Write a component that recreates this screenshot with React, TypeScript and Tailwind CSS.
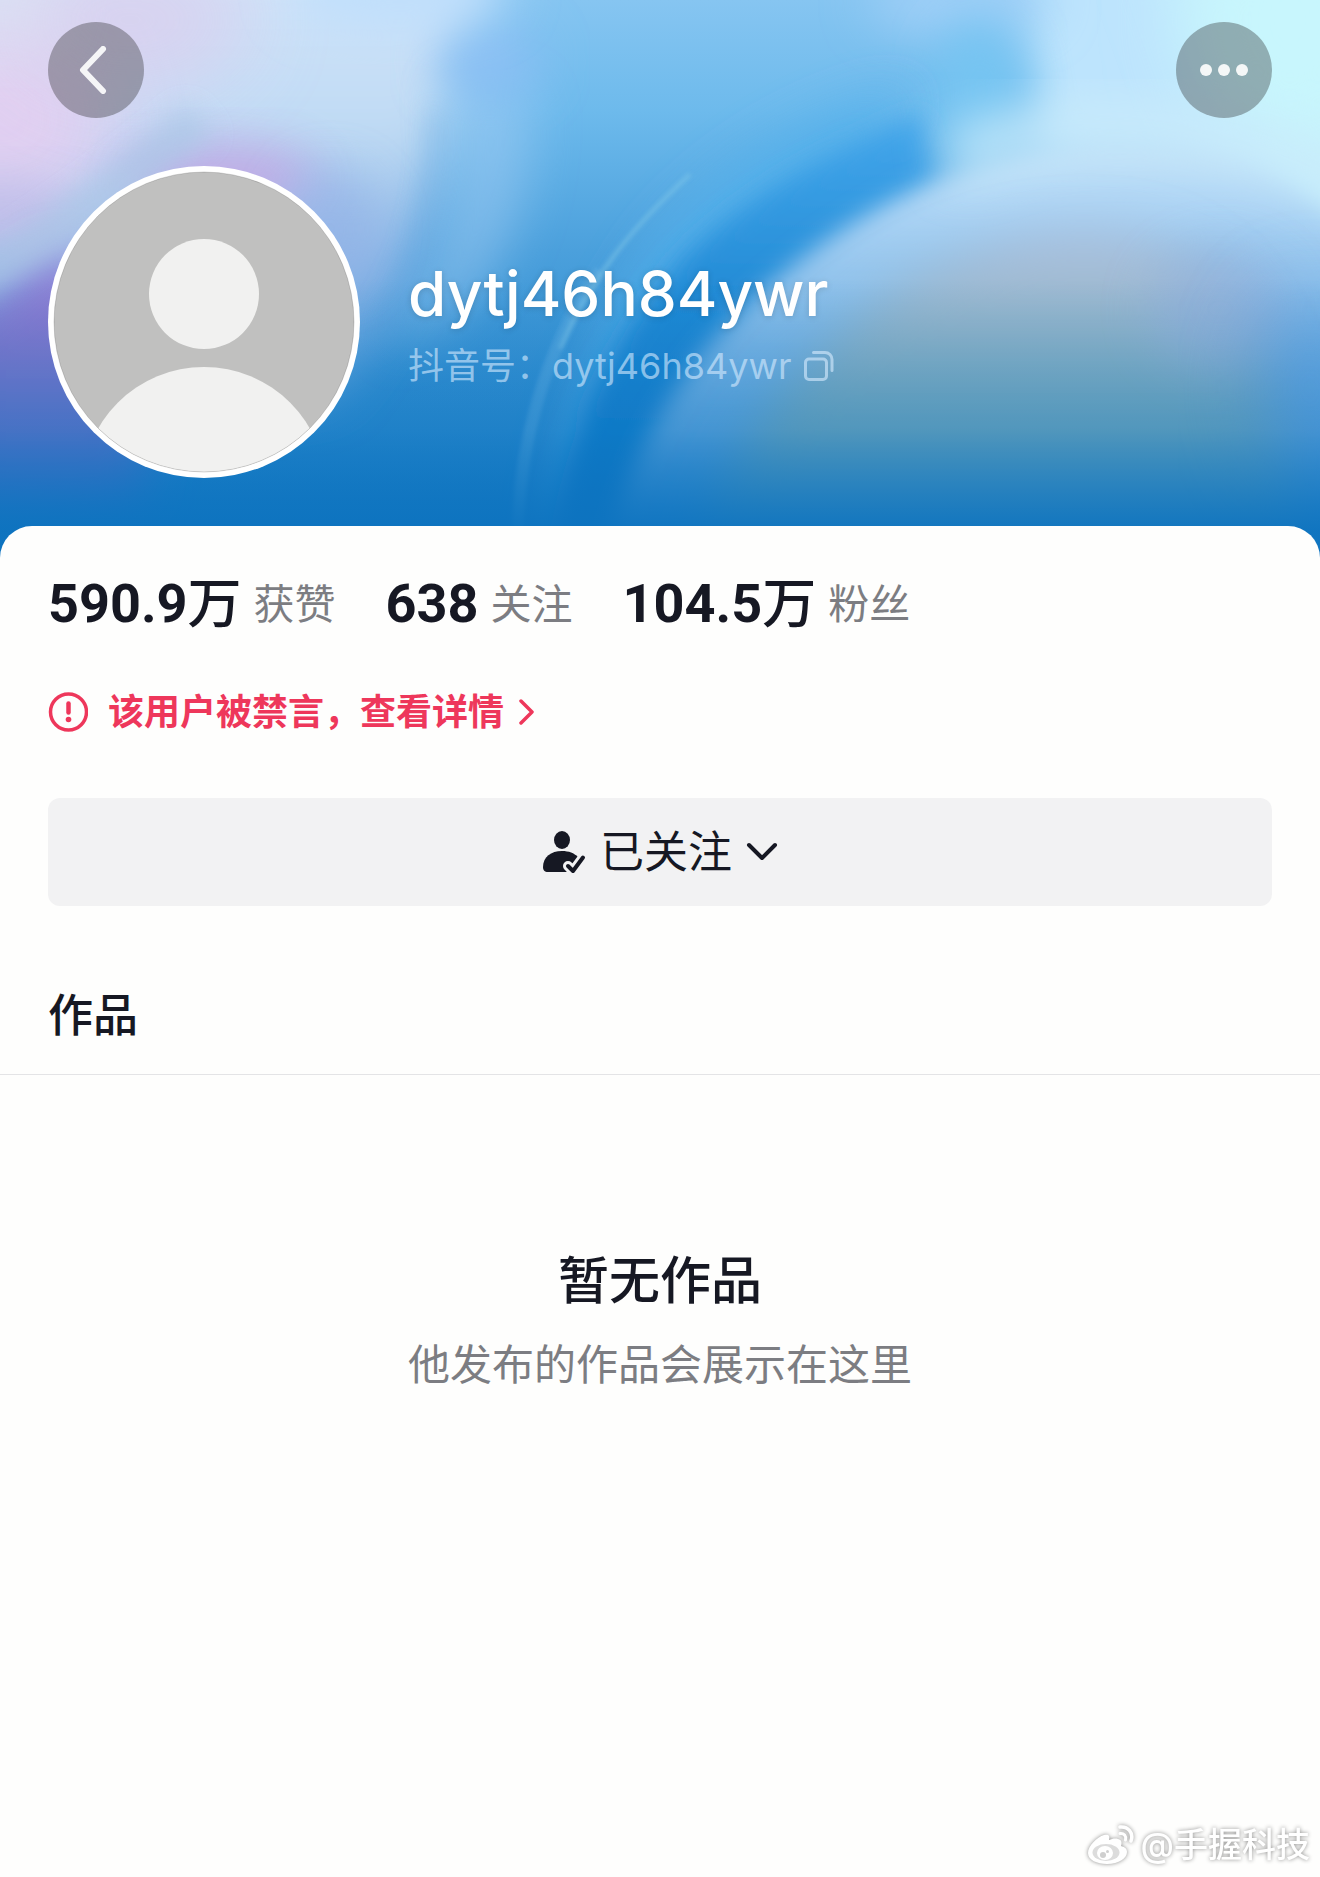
import { useState } from "react";

type Stat = {
  value: string;
  unit?: string;
  label: string;
};

const user = {
  name: "dytj46h84ywr",
  douyinId: "dytj46h84ywr",
};

const stats: Stat[] = [
  { value: "590.9", unit: "万", label: "获赞" },
  { value: "638", label: "关注" },
  { value: "104.5", unit: "万", label: "粉丝" },
];

// Abstract cover artwork behind the profile header
const Cover = () => (
  <svg
    className="absolute inset-0 h-full w-full"
    viewBox="0 0 1320 560"
    preserveAspectRatio="none"
    aria-hidden="true">
    <defs>
      <linearGradient id="base" x1="0" y1="0" x2="0" y2="1">
        <stop offset="0" stopColor="#86c5f1" />
        <stop offset="0.2" stopColor="#6dbaec" />
        <stop offset="0.45" stopColor="#4ba0dc" />
        <stop offset="0.7" stopColor="#2e8ccf" />
        <stop offset="1" stopColor="#1077c2" />
      </linearGradient>
      <linearGradient id="fade" x1="0" y1="0" x2="0" y2="1">
        <stop offset="0.5" stopColor="#0d73bf" stopOpacity="0" />
        <stop offset="0.77" stopColor="#0d73bf" stopOpacity="0.3" />
        <stop offset="0.95" stopColor="#0d73bf" stopOpacity="0.93" />
      </linearGradient>
      <linearGradient id="band" x1="0" y1="0" x2="0" y2="1">
        <stop offset="0" stopColor="#45a8ec" />
        <stop offset="0.4" stopColor="#2089d4" />
        <stop offset="0.75" stopColor="#0a78c6" />
        <stop offset="1" stopColor="#0a72c0" />
      </linearGradient>
      <linearGradient id="orb" x1="0" y1="0" x2="0" y2="1">
        <stop offset="0" stopColor="#c6e4f9" />
        <stop offset="0.18" stopColor="#a6d0f3" />
        <stop offset="0.4" stopColor="#7fb8e6" />
        <stop offset="0.7" stopColor="#4c9bd8" />
        <stop offset="1" stopColor="#2283cd" />
      </linearGradient>
      <linearGradient id="core" x1="0" y1="0" x2="0" y2="1">
        <stop offset="0" stopColor="#b0c3e0" />
        <stop offset="0.25" stopColor="#93b4c8" />
        <stop offset="0.5" stopColor="#6fa6ba" />
        <stop offset="1" stopColor="#3f93c0" />
      </linearGradient>
      <linearGradient id="veil" x1="0" y1="0" x2="0" y2="1">
        <stop offset="0" stopColor="#d6e7fb" />
        <stop offset="0.4" stopColor="#c0dbf4" />
        <stop offset="0.7" stopColor="#84b1e4" />
        <stop offset="1" stopColor="#4a9ada" />
      </linearGradient>
      <linearGradient id="violet" x1="0" y1="0" x2="0" y2="1">
        <stop offset="0" stopColor="#9a80d8" />
        <stop offset="0.4" stopColor="#7d74ca" />
        <stop offset="1" stopColor="#3a6fc4" />
      </linearGradient>
      <filter id="b3" x="-50%" y="-50%" width="200%" height="200%">
        <feGaussianBlur stdDeviation="2" />
      </filter>
      <filter id="b12" x="-50%" y="-50%" width="200%" height="200%">
        <feGaussianBlur stdDeviation="12" />
      </filter>
      <filter id="b24" x="-50%" y="-50%" width="200%" height="200%">
        <feGaussianBlur stdDeviation="24" />
      </filter>
      <filter id="b40" x="-60%" y="-60%" width="220%" height="220%">
        <feGaussianBlur stdDeviation="40" />
      </filter>
    </defs>
    <rect width="1320" height="560" fill="url(#base)" />

    {/* left side: pale veil, pink and violet glow */}
    <path
      d="M-80-80H450C470 20 460 90 440 170C420 250 390 320 330 400L-80 440Z"
      fill="url(#veil)"
      filter="url(#b24)"
    />
    <ellipse cx="0" cy="120" rx="120" ry="110" fill="#e4cff1" opacity="0.9" filter="url(#b40)" />
    <ellipse cx="130" cy="20" rx="120" ry="70" fill="#dbcfee" opacity="0.8" filter="url(#b40)" />
    <ellipse cx="0" cy="0" rx="50" ry="40" fill="#dfe2f2" filter="url(#b40)" />
    <ellipse cx="220" cy="180" rx="100" ry="36" fill="#c3a8e4" opacity="0.9" filter="url(#b24)" />
    <ellipse cx="330" cy="230" rx="50" ry="60" fill="#93b0e6" opacity="0.6" filter="url(#b24)" />
    <ellipse cx="0" cy="215" rx="70" ry="34" fill="#c0bce8" opacity="0.8" filter="url(#b24)" />
    <path
      d="M-60 330L70 250L160 380L140 510L-60 520Z"
      fill="url(#violet)"
      filter="url(#b24)"
    />
    <path
      d="M200 120C130 180 60 230-30 285"
      stroke="#aac8e6"
      strokeWidth="40"
      opacity="0.65"
      fill="none"
      filter="url(#b12)"
    />

    {/* fold running down beside the avatar */}
    <path
      d="M446 80C470 180 440 270 385 350C470 330 540 240 530 90Z"
      fill="#a8cff4"
      opacity="0.5"
      filter="url(#b24)"
    />
    <path
      d="M434 110C438 200 405 300 370 350"
      stroke="#5c9fdc"
      strokeWidth="10"
      opacity="0.45"
      fill="none"
      filter="url(#b12)"
    />
    <ellipse cx="490" cy="62" rx="50" ry="34" fill="#8cc0f4" filter="url(#b24)" />
    <ellipse cx="400" cy="-10" rx="110" ry="40" fill="#c0dffc" filter="url(#b24)" />

    {/* top right glow */}
    <path d="M1000-80H1400V300L1180 170L1040 160Z" fill="#bde4fd" filter="url(#b24)" />
    <path d="M1170-80H1400V260L1260 170Z" fill="#c8f4fc" filter="url(#b40)" />
    <ellipse cx="1290" cy="20" rx="100" ry="120" fill="#c8f6fd" filter="url(#b40)" />
    <ellipse cx="960" cy="0" rx="90" ry="36" fill="#9fcff7" filter="url(#b24)" />
    <ellipse cx="980" cy="90" rx="44" ry="70" fill="#76c5f2" filter="url(#b24)" />

    {/* dark ribbon */}
    <path
      d="M910 90C810 110 710 170 650 250C590 340 550 440 545 600H640L800 300Z"
      fill="#52b0eb"
      opacity="0.85"
      filter="url(#b24)"
    />
    <path
      d="M920 115C850 145 750 190 680 260C610 340 560 430 540 600H700L760 330L940 190Z"
      fill="url(#band)"
      filter="url(#b12)"
    />
    <path
      d="M518 560C515 450 545 350 600 272"
      stroke="#7cc0ea"
      strokeWidth="12"
      opacity="0.3"
      fill="none"
      filter="url(#b3)"
    />
    <path
      d="M560 350C590 280 630 230 690 175"
      stroke="#86cbe8"
      strokeWidth="4"
      opacity="0.5"
      fill="none"
      filter="url(#b3)"
    />

    {/* big translucent orb */}
    <path
      d="M595 600C625 430 710 315 850 225C980 145 1120 120 1240 155C1290 175 1340 215 1400 280V620Z"
      fill="url(#orb)"
      filter="url(#b12)"
    />
    <path d="M950 160C1080 100 1220 110 1400 210" stroke="#c9ebfb" strokeWidth="44" fill="none" filter="url(#b24)" />
    <path
      d="M680 600C710 480 780 370 890 295C990 225 1130 205 1210 270C1290 340 1300 450 1290 620Z"
      fill="url(#core)"
      filter="url(#b24)"
    />
    <ellipse cx="1220" cy="310" rx="70" ry="60" fill="#94b2dc" opacity="0.7" filter="url(#b24)" />
    <ellipse cx="1310" cy="390" rx="60" ry="100" fill="#5a9bdc" opacity="0.5" filter="url(#b40)" />
    <rect width="1320" height="560" fill="url(#fade)" />
  </svg>
);

const Avatar = () => (
  <svg
    className="block size-full"
    viewBox="0 0 312 312"
    role="img"
    aria-label="头像">
    <defs>
      <clipPath id="avatar-clip">
        <circle cx="156" cy="156" r="150" />
      </clipPath>
    </defs>
    <circle cx="156" cy="156" r="156" fill="#ffffff" />
    <g clipPath="url(#avatar-clip)">
      <rect width="312" height="312" fill="#c0c0bf" />
      <circle cx="156" cy="128" r="55" fill="#f1f1f0" />
      <circle cx="156" cy="323" r="122" fill="#f1f1f0" />
    </g>
    <circle cx="156" cy="156" r="150" fill="none" stroke="#000000" strokeOpacity="0.15" />
  </svg>
);

const CopyIcon = () => (
  <svg className="block size-8" viewBox="0 0 32 32" fill="none" stroke="currentColor" strokeWidth="3" strokeLinecap="round">
    <rect x="2.5" y="9" width="21" height="20.5" rx="3.5" />
    <path d="M10.5 2.5H22a7 7 0 0 1 7 7V20.5" />
  </svg>
);

const FollowedIcon = () => (
  <svg className="h-11 w-11" viewBox="0 0 44 44">
    <ellipse cx="20" cy="10" rx="8" ry="9" fill="currentColor" />
    <path
      d="M20 21C27 21 32 23 36 27V42H6C2.5 42 1 40 1 37C1 27 9 21 20 21Z"
      fill="currentColor"
    />
    <path d="M26 36L31 41L41 27.5V46H24Z" fill="#f2f2f3" />
    <path d="M26 36L31 41L41 27.5" fill="none" stroke="#f2f2f3" strokeWidth="10" strokeLinejoin="round" strokeLinecap="round" />
    <path d="M26 36L31 41L41 27.5" fill="none" stroke="currentColor" strokeWidth="4" strokeLinejoin="round" strokeLinecap="round" />
  </svg>
);

const WeiboIcon = () => (
  <svg className="h-11 w-12" viewBox="0 0 48 44" fill="none">
    <path
      d="M17 12C10 14 1 23 1 30C1 37 10 41 20 41C32 41 40 35 40 29C40 25 37 24 34 23C35 20 35 17 31 16C28 15 25 16 22 17C23 13 22 11 17 12Z"
      fill="#ffffff"
    />
    <ellipse cx="19" cy="29.5" rx="13.5" ry="8.5" fill="#dcdcdc" />
    <ellipse cx="18" cy="30" rx="8" ry="7" fill="#ffffff" />
    <circle cx="16" cy="32" r="3" fill="#cfcfcf" />
    <circle cx="20.5" cy="28.5" r="1.5" fill="#cfcfcf" />
    <path d="M33 4C41 3 47 10 44 18" stroke="#ffffff" strokeWidth="3.5" strokeLinecap="round" />
    <path d="M33 10.5C37 10 39.5 13 38.5 17" stroke="#ffffff" strokeWidth="3" strokeLinecap="round" />
  </svg>
);

const App = () => {
  const [followed, setFollowed] = useState(true);

  return (
    <div className="relative flex min-h-screen flex-col bg-[#fefefd] font-['Inter','Noto_Sans_CJK_SC',sans-serif] text-[#161823]">
      {/* Header */}
      <header className="relative px-12 pt-[22px] pb-20">
        <Cover />
        <div className="relative flex justify-between">
          <button
            type="button"
            aria-label="返回"
            className="flex size-24 items-center justify-center rounded-full bg-[#282828]/35 text-white/90">
            <svg className="size-12" viewBox="0 0 48 48" fill="none" stroke="currentColor" strokeWidth="6" strokeLinecap="round" strokeLinejoin="round">
              <path d="M31 3L11 24L31 45" />
            </svg>
          </button>
          <button
            type="button"
            aria-label="更多"
            className="flex size-24 items-center justify-center gap-1.5 rounded-full bg-[#282828]/35">
            <span className="size-3 rounded-full bg-white/90" />
            <span className="size-3 rounded-full bg-white/90" />
            <span className="size-3 rounded-full bg-white/90" />
          </button>
        </div>

        <div className="relative mt-12 flex items-center gap-12">
          <div className="size-[312px] shrink-0">
            <Avatar />
          </div>
          <div className="pt-2">
            <h1 className="text-[62px] leading-[80px] font-medium text-white [text-shadow:0_1px_6px_rgba(0,0,0,0.15)]">
              {user.name}
            </h1>
            <div className="flex items-center gap-3 text-4xl leading-[64px] text-[#d8ecff]/60">
              <span>抖音号：{user.douyinId}</span>
              <button type="button" aria-label="复制抖音号">
                <CopyIcon />
              </button>
            </div>
          </div>
        </div>
      </header>

      {/* Panel */}
      <main className="relative -mt-8 rounded-t-[32px] bg-[#fefefd]">
        <ul className="flex gap-[50px] px-12 pt-[42px]">
          {stats.map((item) => (
            <li key={item.label} className="flex items-center gap-3">
              <span className="flex items-center text-[54px] leading-[72px]">
                <b className="font-[Roboto] font-bold">{item.value}</b>
                {item.unit && <span className="font-medium">{item.unit}</span>}
              </span>
              <span className="text-[41px] leading-[72px] text-[#7c7d82]">{item.label}</span>
            </li>
          ))}
        </ul>

        <a href="#detail" className="mt-[46px] flex items-center gap-5 px-12 text-4xl leading-[52px] font-bold text-[#ee375b]">
          <svg className="size-10" viewBox="0 0 40 40" fill="none" stroke="currentColor" strokeWidth="3.5" strokeLinecap="round">
            <circle cx="20.5" cy="20" r="18" />
            <path d="M20.5 11.5V20.5" strokeWidth="4.5" />
            <circle cx="20.5" cy="27.5" r="2.8" fill="currentColor" stroke="none" />
          </svg>
          <span className="flex items-center gap-3.5">
            该用户被禁言，查看详情
            <svg className="h-7 w-4" viewBox="0 0 16 28" fill="none" stroke="currentColor" strokeWidth="3.5" strokeLinecap="round" strokeLinejoin="round">
              <path d="M3 3L14 14L3 25" />
            </svg>
          </span>
        </a>

        <div className="mt-[60px] px-12">
          <button
            type="button"
            onClick={() => setFollowed(!followed)}
            className="flex h-[108px] w-full items-center justify-center gap-3.5 rounded-xl bg-[#f2f2f3] text-[44px]">
            <FollowedIcon />
            <span>{followed ? "已关注" : "关注"}</span>
            <svg className="h-8 w-8" viewBox="0 0 32 32" fill="none" stroke="currentColor" strokeWidth="4" strokeLinecap="round" strokeLinejoin="round">
              <path d="M3 9L16 22L29 9" />
            </svg>
          </button>
        </div>

        <h2 className="mt-20 border-b border-[#e4e4e6] px-12 pb-7 text-[45px] leading-[60px] font-medium">
          作品
        </h2>

        <section className="flex flex-col items-center pt-[170px] text-center">
          <h3 className="text-[51px] leading-[72px] font-medium">暂无作品</h3>
          <p className="mt-4 text-[42px] leading-[64px] text-[#7c7d82]">他发布的作品会展示在这里</p>
        </section>
      </main>

      {/* Watermark */}
      <footer className="mt-auto flex items-center justify-end gap-1.5 px-2.5 pb-2.5 text-[34px] leading-[44px] font-medium text-white [filter:drop-shadow(0_0_2px_rgba(0,0,0,0.45))]">
        <WeiboIcon />
        <span>@手握科技</span>
      </footer>
    </div>
  );
};

export default App;
